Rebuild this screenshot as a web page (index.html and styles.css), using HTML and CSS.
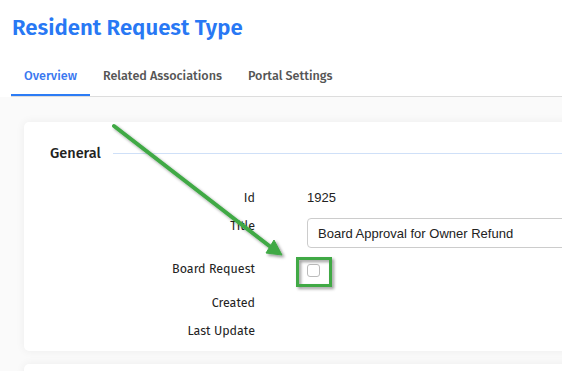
FILE: index.html
```html
<!DOCTYPE html>
<html lang="en">
<head>
    <meta charset="UTF-8">
    <meta name="viewport" content="width=device-width, initial-scale=1.0">
    <title>Resident Request Type</title>
    <link rel="stylesheet" href="styles.css">
</head>
<body>

    <!-- Page header -->
    <div class="page-head">
        <h1>Resident Request Type</h1>
    </div>

    <!-- Tabs -->
    <div class="tabs">
        <div class="tab active">Overview</div>
        <div class="tab">Related Associations</div>
        <div class="tab">Portal Settings</div>
    </div>

    <!-- Content -->
    <div class="content">
        <div class="card">
            <div class="section-title">
                <span>General</span>
                <div class="section-line"></div>
            </div>

            <div class="form-row first">
                <div class="label">Id</div>
                <div class="value">1925</div>
            </div>
            <div class="form-row title-row">
                <div class="label">Title</div>
                <div class="value"><input type="text" class="text-input" value="Board Approval for Owner Refund"></div>
            </div>
            <div class="form-row check-row">
                <div class="label">Board Request</div>
                <div class="value"><span class="checkbox"></span></div>
            </div>
            <div class="form-row created-row">
                <div class="label">Created</div>
                <div class="value"></div>
            </div>
            <div class="form-row update-row">
                <div class="label">Last Update</div>
                <div class="value"></div>
            </div>
        </div>
        <div class="card next-card"></div>
    </div>

    <!-- Annotation overlay -->
    <svg class="annotation" width="562" height="371" viewBox="0 0 562 371">
        <defs>
            <filter id="shadow" x="-10%" y="-10%" width="130%" height="130%">
                <feDropShadow dx="2" dy="2" stdDeviation="1.5" flood-color="#000" flood-opacity="0.4"/>
            </filter>
        </defs>
        <g filter="url(#shadow)" fill="none" stroke="#3fa945">
            <line x1="114" y1="126" x2="272" y2="248" stroke-width="4" stroke-linecap="round"/>
            <polygon points="282,255 266,253 274,240" fill="#3fa945" stroke-width="1" stroke-linejoin="round"/>
            <rect x="297.5" y="258.5" width="33" height="27" stroke-width="3"/>
        </g>
    </svg>

</body>
</html>
```

FILE: styles.css
```css
body {
    margin: 0;
    font-family: "Fira Sans", Lato, "Open Sans", sans-serif;
    background: #fff;
    overflow: hidden;
    width: 562px;
    height: 371px;
    position: relative;
}
.page-head {
    padding: 14px 12px 0;
}
h1 {
    margin: 0;
    font-size: 22.2px;
    font-weight: 600;
    color: #2878f4;
    line-height: 28px;
}
.tabs {
    display: flex;
    margin: 18px 0 0 11px;
    border-bottom: 1px solid #ddd;
}
.tab {
    padding: 0 13px;
    height: 36px;
    line-height: 32px;
    font-size: 12.6px;
    font-weight: 500;
    color: #555;
    box-sizing: border-box;
}
.tab.active {
    color: #3a78f0;
    border-bottom: 2px solid #2c7cf5;
    margin-bottom: -1px;
}
.content {
    background: #fafafa;
    padding: 25px 0 0 24px;
    height: 300px;
}
.card {
    background: #fff;
    width: 600px;
    border-radius: 5px;
    box-shadow: 0 0 10px rgba(0, 0, 0, 0.06);
    padding: 21px 0 10px 26px;
    box-sizing: border-box;
}
.next-card {
    margin-top: 13px;
    height: 40px;
}
.section-title {
    display: flex;
    align-items: center;
    height: 20px;
    font-size: 14.5px;
    font-weight: 500;
    color: #222;
}
.section-line {
    flex: 1;
    height: 1px;
    background: #cfe0f8;
    margin-left: 12px;
}
.form-row {
    display: flex;
    align-items: flex-start;
    line-height: 20px;
    font-size: 12.5px;
}
.label {
    width: 205px;
    text-align: right;
    color: #222;
    flex-shrink: 0;
}
.value {
    margin-left: 52px;
    flex: 1;
    font-family: "Liberation Sans", Arial, sans-serif;
    font-size: 13px;
    color: #222;
}
.first {
    margin-top: 25px;
}
.title-row {
    margin-top: 10px;
}
.title-row .label {
    margin-top: -2px;
}
.text-input {
    display: block;
    width: 100%;
    height: 30px;
    box-sizing: border-box;
    border: 1px solid #ccc;
    border-radius: 4px;
    padding: 0 10px;
    font-family: "Liberation Sans", Arial, sans-serif;
    font-size: 13px;
    color: #222;
}
.check-row {
    margin-top: 11px;
}
.checkbox {
    display: block;
    width: 13px;
    height: 13px;
    margin-top: 5px;
    box-sizing: border-box;
    border: 1px solid #bbb;
    border-radius: 3px;
    background: #fff;
}
.created-row {
    margin-top: 14px;
}
.update-row {
    margin-top: 8px;
}
.annotation {
    position: absolute;
    top: 0;
    left: 0;
    pointer-events: none;
}
```
